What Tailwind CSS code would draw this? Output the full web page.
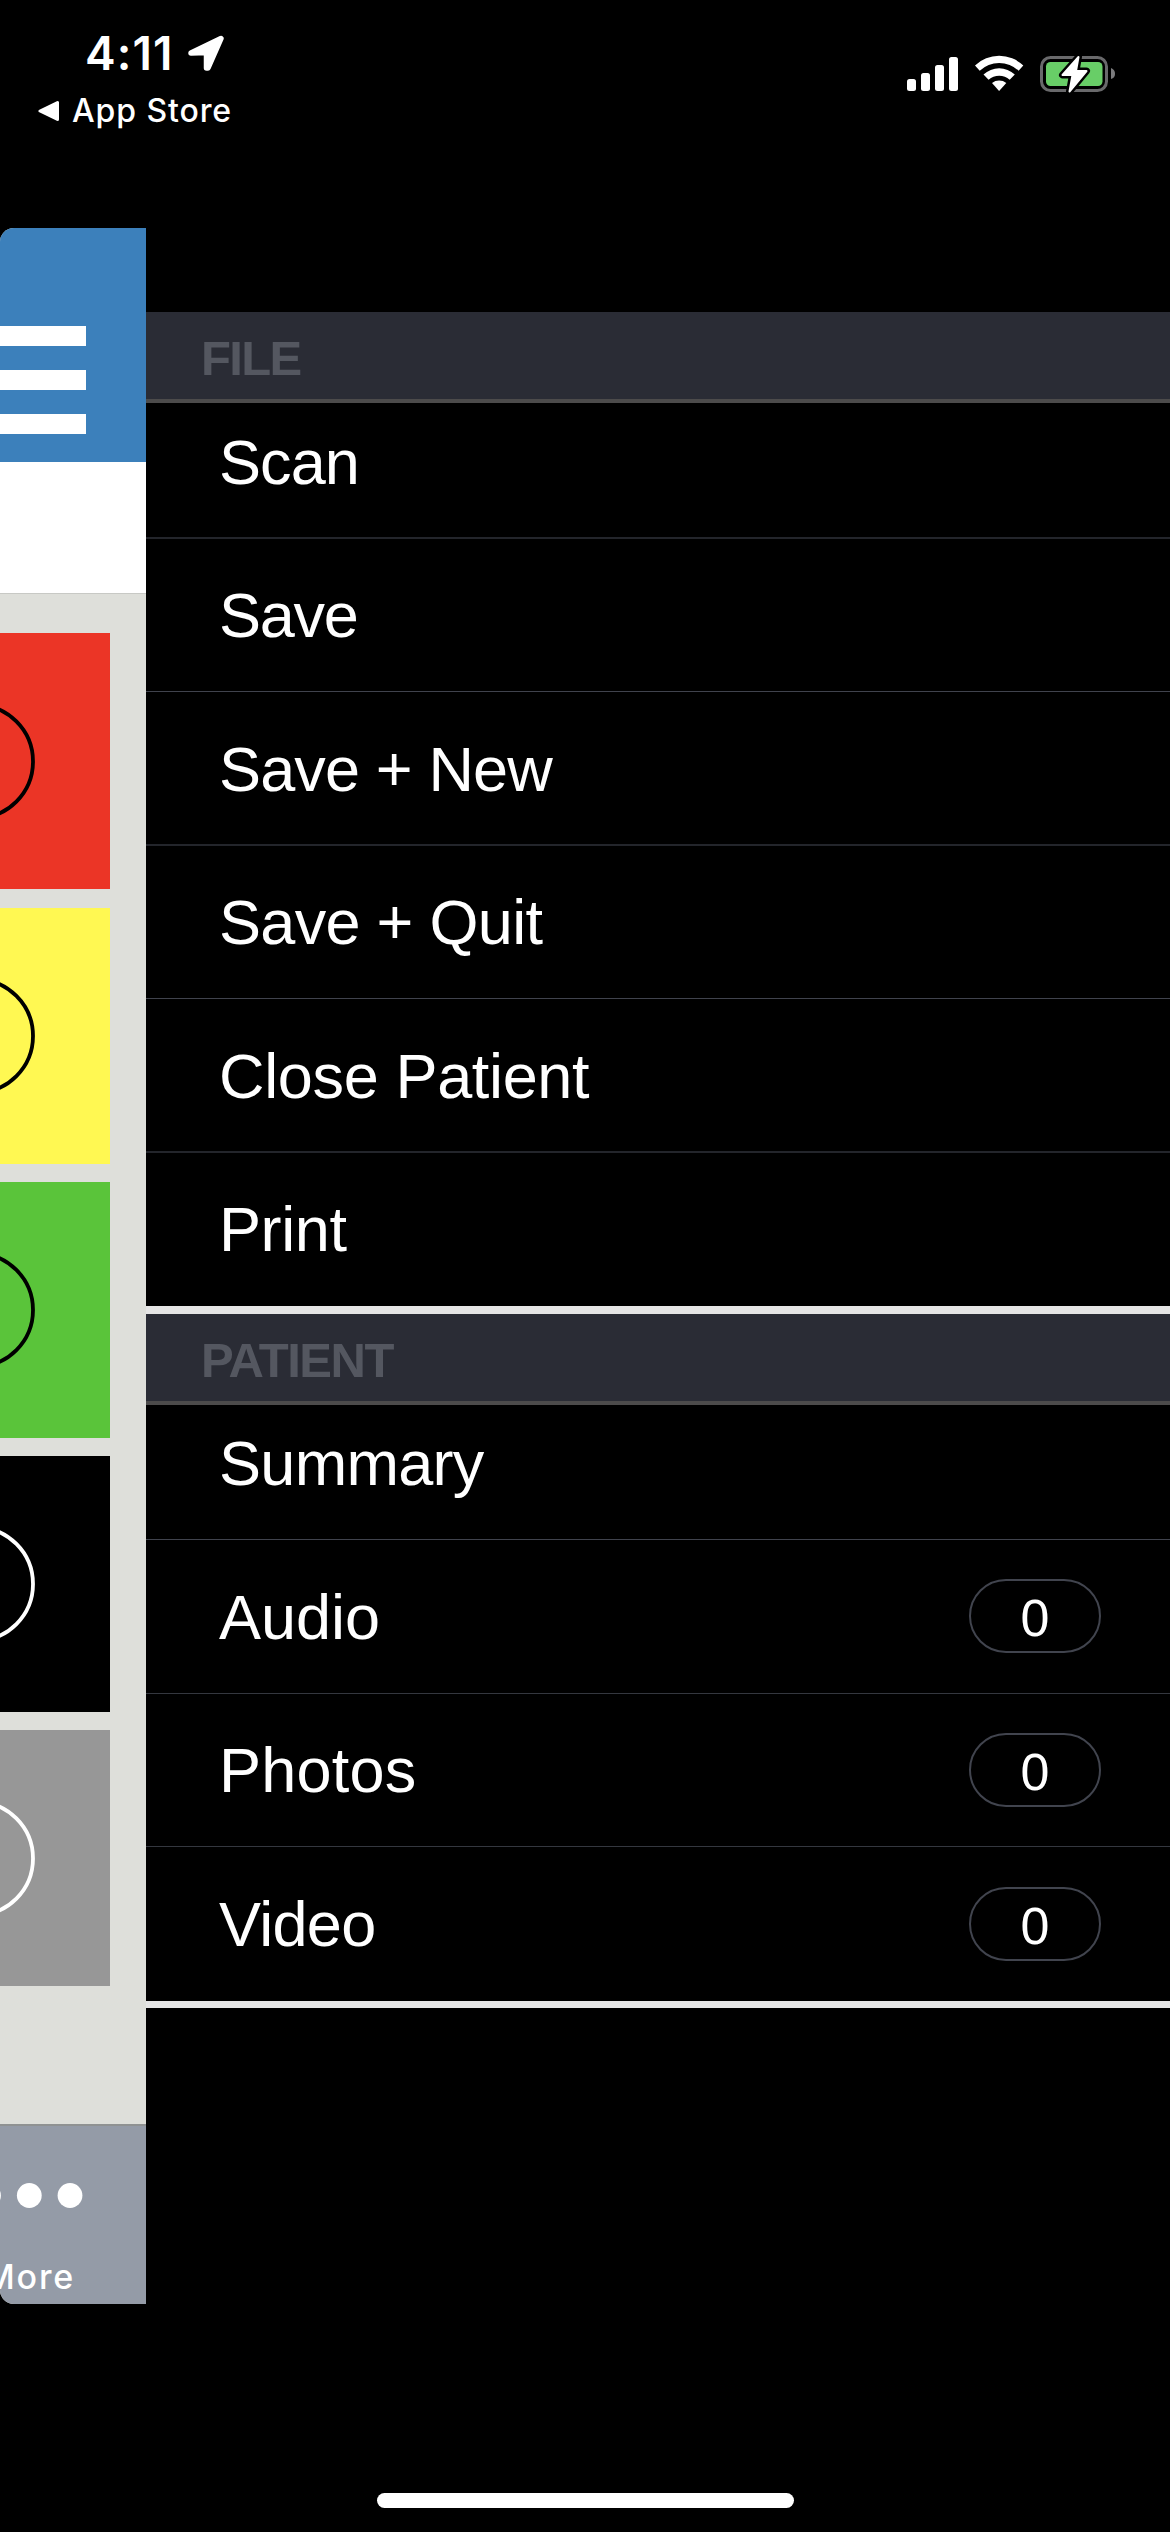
<!DOCTYPE html>
<html lang="en">
<head>
<meta charset="utf-8">
<title>Menu</title>
<script src="https://cdn.jsdelivr.net/npm/@tailwindcss/browser@4"></script>
</head>
<body class="bg-black">
<div class="w-[1170px] h-[2532px] bg-black text-white overflow-hidden flex flex-col font-['Liberation_Sans',sans-serif]">
  <!-- Status bar -->
  <header class="h-[228px] shrink-0 flex justify-between font-['Inter',sans-serif]">
    <div class="pt-[25px] pl-[38px]">
      <div class="flex items-center h-[56px] pl-[47px]">
        <span class="text-[46px] leading-[56px] font-semibold tracking-[1.1px]">4:11</span>
        <svg class="ml-[14px] w-[37px] h-[37px]" viewBox="0 0 37 37"><path d="M3 18 33 3.500 20 33 18.500 33 18.500 17.500Z" fill="#fff" stroke="#fff" stroke-width="5.500" stroke-linejoin="round"/></svg>
      </div>
      <div class="flex items-center h-[40px] mt-[10px]">
        <svg class="w-[22px] h-[22px]" viewBox="0 0 22 22"><path d="M2 11 19.500 2.500V19.500Z" fill="#fff" stroke="#fff" stroke-width="3" stroke-linejoin="round"/></svg>
        <span class="ml-[12px] text-[32px] leading-[40px] font-medium tracking-[0.9px]">App Store</span>
      </div>
    </div>
    <svg class="mt-[50px] mr-[50px] w-[220px] h-[48px]" viewBox="900 50 220 48">
      <g fill="#fff">
        <rect x="907" y="79" width="9" height="12" rx="2.500"/>
        <rect x="921" y="73" width="9" height="18" rx="2.500"/>
        <rect x="935" y="65" width="9" height="26" rx="2.500"/>
        <rect x="949" y="57" width="9" height="34" rx="2.500"/>
        <path d="M975 65.500A35 35 0 0 1 1023.300 65.500L1018.600 70.800A28 28 0 0 0 979.700 70.800Z"/>
        <path d="M983.500 74.500A23 23 0 0 1 1014.800 74.500L1009.700 79.700A16 16 0 0 0 988.600 79.700Z"/>
        <path d="M992 83A11.500 11.500 0 0 1 1006.300 83L999.100 91Z"/>
      </g>
      <rect x="1041.500" y="57.500" width="65" height="33" rx="9" fill="none" stroke="#69696b" stroke-width="3"/>
      <path d="M1111 68Q1115 69.500 1115 73.800T1111 79Z" fill="#7b7b7d"/>
      <rect x="1046" y="62" width="56.500" height="24" rx="4.500" fill="#68ce67"/>
      <path d="M1078.500 57 1062.500 75H1072.500L1069.500 91.500 1086.500 71H1076Z" fill="#fff" stroke="#000" stroke-width="7" stroke-linejoin="round"/>
      <path d="M1078.500 57 1062.500 75H1072.500L1069.500 91.500 1086.500 71H1076Z" fill="#fff" stroke="#fff" stroke-width="2" stroke-linejoin="round"/>
    </svg>
  </header>

  <main class="h-[2076px] shrink-0 flex">
    <!-- Main screen, pushed aside by the menu -->
    <aside class="w-[146px] h-[2076px] rounded-l-[14px] overflow-hidden bg-[#dedfda] flex flex-col">
      <div class="h-[234px] shrink-0 bg-[#3c80bb] pt-[98px] flex flex-col gap-[24px]">
        <div class="w-[86px] h-[20px] bg-white"></div>
        <div class="w-[86px] h-[20px] bg-white"></div>
        <div class="w-[86px] h-[20px] bg-white"></div>
      </div>
      <div class="h-[132px] shrink-0 bg-white border-b border-[#c8c9c5]"></div>
      <div class="pt-[39px] flex flex-col gap-[18px] w-[110px] h-[1530px] shrink-0">
        <div class="h-[256px] bg-[#eb3526] text-black"><svg class="w-[110px] h-[256px]" viewBox="0 0 110 256"><circle cx="-23.700" cy="128.500" r="56.700" fill="none" stroke="currentColor" stroke-width="3.800"/></svg></div>
        <div class="h-[256px] mt-[1px] bg-[#fff852] text-black"><svg class="w-[110px] h-[256px]" viewBox="0 0 110 256"><circle cx="-23.700" cy="128" r="56.700" fill="none" stroke="currentColor" stroke-width="3.800"/></svg></div>
        <div class="h-[256px] bg-[#5ac43a] text-black"><svg class="w-[110px] h-[256px]" viewBox="0 0 110 256"><circle cx="-23.700" cy="128" r="56.700" fill="none" stroke="currentColor" stroke-width="3.800"/></svg></div>
        <div class="h-[256px] bg-black text-white"><svg class="w-[110px] h-[256px]" viewBox="0 0 110 256"><circle cx="-23.700" cy="128" r="56.700" fill="none" stroke="currentColor" stroke-width="3.800"/></svg></div>
        <div class="h-[256px] bg-[#979797] text-white"><svg class="w-[110px] h-[256px]" viewBox="0 0 110 256"><circle cx="-23.700" cy="128.500" r="56.700" fill="none" stroke="currentColor" stroke-width="3.800"/></svg></div>
      </div>
      <div class="h-[180px] shrink-0 border-t-2 border-[#8f9292] bg-[#949ba7] flex flex-col">
        <svg class="w-[146px] h-[140px] shrink-0" viewBox="0 0 146 140"><g fill="#fff"><circle cx="-11.500" cy="69.500" r="12.400"/><circle cx="29.300" cy="69.500" r="12.400"/><circle cx="70" cy="69.500" r="12.400"/></g></svg>
        <span class="self-end mr-[71px] mt-[-9px] text-[34px] leading-[40px] font-medium tracking-[1.800px] font-['Inter',sans-serif]">More</span>
      </div>
    </aside>

    <!-- Menu -->
    <nav class="flex-1 pt-[84px] text-[63px]">
      <h2 class="h-[91px] bg-[#2a2c35] border-b-4 border-[#4c4b4b] pl-[55px] text-[#545760] text-[49px] font-bold leading-[93px] tracking-[-1.700px]">FILE</h2>
      <ul>
        <li class="h-[136px] border-b-2 border-[#23252b] pl-[73px] flex items-end"><span class="leading-[150px] tracking-[-0.9px]">Scan</span></li>
        <li class="h-[153px] border-b border-[#40434d] pl-[73px] flex items-end"><span class="leading-[151px] tracking-[-1.3px]">Save</span></li>
        <li class="h-[154px] border-b-2 border-[#23252b] pl-[73px] flex items-end"><span class="leading-[149px] tracking-[-0.85px]">Save + New</span></li>
        <li class="h-[153px] border-b border-[#40434d] pl-[73px] flex items-end"><span class="leading-[151px] tracking-[-0.7px]">Save + Quit</span></li>
        <li class="h-[154px] border-b-2 border-[#23252b] pl-[73px] flex items-end"><span class="leading-[149px] tracking-[-0.35px]">Close Patient</span></li>
        <li class="h-[161px] border-b-8 border-[#e5e5e5] pl-[73px] flex items-end"><span class="leading-[153px] tracking-[-0.4px]">Print</span></li>
      </ul>
      <h2 class="h-[91px] bg-[#2a2c35] border-b-4 border-[#4c4b4b] pl-[55px] text-[#545760] text-[49px] font-bold leading-[93px] tracking-[-1.500px]">PATIENT</h2>
      <ul>
        <li class="h-[135px] border-b border-[#40434d] pl-[73px] flex items-end"><span class="leading-[151px] tracking-[-0.7px]">Summary</span></li>
        <li class="h-[154px] border-b border-[#34373f] pl-[73px] pr-[69px] flex items-end justify-between"><span class="leading-[151px]">Audio</span><span class="w-[132px] h-[74px] mb-[40px] border-2 border-[#41444e] rounded-full text-center text-[52px] leading-[74px]">0</span></li>
        <li class="h-[153px] border-b border-[#34373f] pl-[73px] pr-[69px] flex items-end justify-between"><span class="leading-[151px] tracking-[0.2px]">Photos</span><span class="w-[132px] h-[74px] mb-[39px] border-2 border-[#41444e] rounded-full text-center text-[52px] leading-[74px]">0</span></li>
        <li class="h-[161px] border-b-7 border-[#e5e5e5] pl-[73px] pr-[69px] flex items-end justify-between"><span class="leading-[153px] tracking-[-0.7px]">Video</span><span class="w-[132px] h-[74px] mb-[40px] border-2 border-[#41444e] rounded-full text-center text-[52px] leading-[74px]">0</span></li>
      </ul>
    </nav>
  </main>

  <!-- Home indicator -->
  <div class="mt-[189px] mx-auto w-[417px] h-[15px] shrink-0 rounded-full bg-white"></div>
</div>
</body>
</html>
